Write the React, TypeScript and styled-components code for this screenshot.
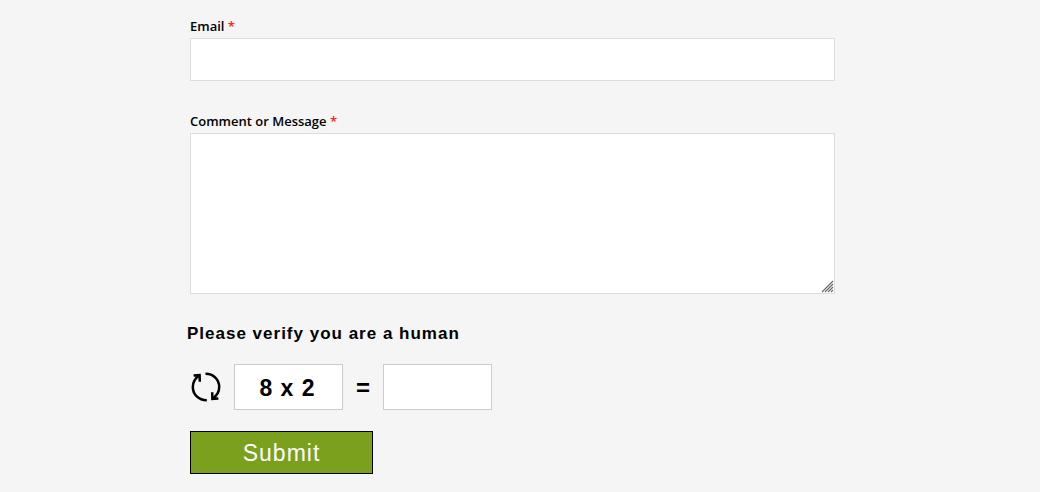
import React, { useState } from "react";
import styled, { createGlobalStyle } from "styled-components";

const GlobalStyle = createGlobalStyle`
  *, *::before, *::after { box-sizing: border-box; }
  body {
    margin: 0;
    background: #f5f5f5;
    color: #000;
    font-family: "Liberation Sans", Arial, sans-serif;
  }
`;

const ContactForm = styled.form`
  display: flex;
  flex-direction: column;
  padding: 17px 205px 18px 190px;

  @media (max-width: 800px) {
    padding-left: 24px;
    padding-right: 24px;
  }
`;

const Field = styled.div<{ $last?: boolean }>`
  display: flex;
  flex-direction: column;
  gap: 3px;
  margin-bottom: ${(props) => (props.$last ? 27 : 31)}px;
`;

const Label = styled.label`
  font: 600 13px/18px "Open Sans", sans-serif;
`;

const Required = styled.span`
  color: #f22;
`;

const TextInput = styled.input`
  width: 100%;
  height: 43px;
  padding: 8px 12px;
  border: 1px solid #ddd;
  background: #fff;
  font: 16px "Open Sans", sans-serif;
`;

const MessageBox = styled.div`
  position: relative;
  display: flex;
`;

const TextArea = styled.textarea`
  width: 100%;
  height: 161px;
  padding: 8px 12px;
  border: 1px solid #ddd;
  background: #fff;
  font: 16px "Open Sans", sans-serif;
  resize: vertical;

  &::-webkit-resizer {
    background: transparent;
  }
`;

const Grip = styled.svg`
  position: absolute;
  right: 1px;
  bottom: 1px;
  pointer-events: none;
`;

const Verify = styled.fieldset`
  min-width: 0;
  margin: 0 0 21px;
  padding: 0;
  border: 0;
`;

const VerifyTitle = styled.legend`
  margin-left: -3px;
  margin-bottom: 17px;
  padding: 0;
  font-size: 17px;
  font-weight: 700;
  line-height: 26px;
  letter-spacing: 1px;
`;

const VerifyRow = styled.div`
  display: flex;
  align-items: center;
`;

const RefreshButton = styled.button`
  display: flex;
  width: 32px;
  height: 32px;
  margin-right: 12px;
  padding: 0;
  border: 0;
  background: none;
  color: #000;
  cursor: pointer;
`;

const Question = styled.output`
  display: flex;
  align-items: center;
  justify-content: center;
  width: 109px;
  height: 46px;
  padding: 2px 2px 0 0;
  border: 1px solid #ccc;
  background: #fff;
  font-size: 23px;
  font-weight: 700;
  letter-spacing: 1px;
`;

const Equals = styled.span`
  width: 40px;
  padding-top: 2px;
  text-align: center;
  font-size: 24px;
  font-weight: 700;
`;

const Answer = styled.input`
  width: 109px;
  height: 46px;
  padding: 4px;
  border: 1px solid #ccc;
  background: #fff;
  font: 700 23px "Liberation Sans", Arial, sans-serif;
  text-align: center;
`;

const SubmitButton = styled.button`
  align-self: flex-start;
  width: 183px;
  height: 43px;
  padding: 2px 0 0;
  border: 1px solid #000;
  background: #7aa01e;
  color: #fff;
  font: 23px "Liberation Sans", Arial, sans-serif;
  letter-spacing: 1px;
  cursor: pointer;
`;

const questions = ["8 x 2", "5 x 3", "9 + 4", "7 x 2"];

export default function App() {
  const [index, setIndex] = useState(0);

  return (
    <>
      <GlobalStyle />
      <ContactForm onSubmit={(event) => event.preventDefault()}>
        <Field>
          <Label htmlFor="email">
            Email <Required>*</Required>
          </Label>
          <TextInput id="email" type="email" required />
        </Field>
        <Field $last>
          <Label htmlFor="message">
            Comment or Message <Required>*</Required>
          </Label>
          <MessageBox>
            <TextArea id="message" required />
            <Grip width="13" height="13" viewBox="0 0 13 13" aria-hidden="true">
              <path d="M1 12 12 1M4 12l8-8M7 12l5-5M10 12l2-2" stroke="#666" strokeWidth="1.1" fill="none" />
            </Grip>
          </MessageBox>
        </Field>
        <Verify>
          <VerifyTitle>Please verify you are a human</VerifyTitle>
          <VerifyRow>
            <RefreshButton
              type="button"
              aria-label="New question"
              onClick={() => setIndex((index + 1) % questions.length)}
            >
              <svg width="32" height="32" viewBox="0 0 32 32" fill="none" stroke="currentColor" strokeWidth="2.5">
                <path d="M15.5 2.8C23.5 2.8 29.2 8.6 29.2 16c0 4.6-2 8.2-6.2 11.4" />
                <path d="M16.8 29.2C8.6 29.2 2.8 23.4 2.8 16c0-4.6 2-8.2 6.2-11.4" />
                <path d="M3.6 4.6l6-.4.2 6.6" />
                <path d="M28.4 27.4l-6 .4-.2-6.6" />
              </svg>
            </RefreshButton>
            <Question id="question">{questions[index]}</Question>
            <Equals>=</Equals>
            <Answer type="text" inputMode="numeric" aria-labelledby="question" required />
          </VerifyRow>
        </Verify>
        <SubmitButton type="submit">Submit</SubmitButton>
      </ContactForm>
    </>
  );
}
